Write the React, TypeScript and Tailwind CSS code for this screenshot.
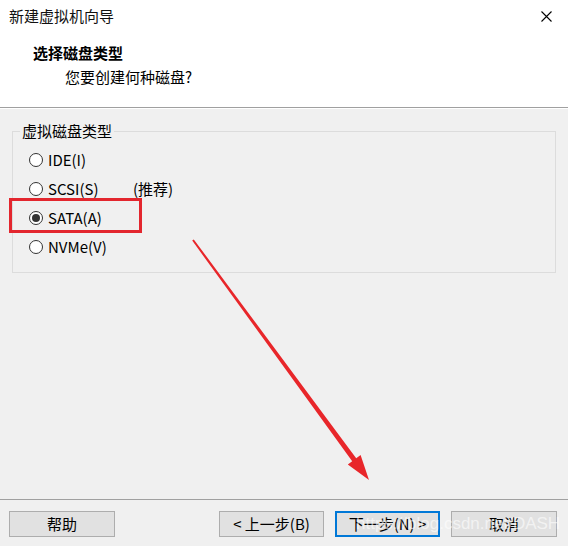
import React from "react";

const font = '"Microsoft YaHei", "Noto Sans CJK SC", "Noto Sans", sans-serif';

function Radio({ checked }: { checked?: boolean }) {
  return (
    <span className="flex h-[14px] w-[14px] items-center justify-center rounded-full border border-[#333] bg-white">
      {checked && <span className="h-[8px] w-[8px] rounded-full bg-[#333]" />}
    </span>
  );
}

function Btn({ children, primary, wide }: { children: React.ReactNode; primary?: boolean; wide?: boolean }) {
  return (
    <div
      className={
        "flex h-[26px] items-center justify-center bg-[#e1e1e1] text-[15px] text-black " +
        (wide ? "w-[106px] " : "w-[105px] ") +
        (primary ? "border-2 border-[#0078d7]" : "border border-[#adadad]")
      }
    >
      {children}
    </div>
  );
}

export default function App() {
  const rows = [
    { label: "IDE(I)" },
    { label: "SCSI(S)", extra: "(推荐)" },
    { label: "SATA(A)", checked: true },
    { label: "NVMe(V)" },
  ];
  return (
    <div
      className="relative flex h-[546px] w-[568px] flex-col overflow-hidden bg-[#f0f0f0] text-black"
      style={{ fontFamily: font }}
    >
      <div className="h-[108px] shrink-0 border-b border-[#a0a0a0] bg-white">
        <div className="flex h-[32px] items-center justify-between pl-[9px] pr-[16px]">
          <span className="text-[15px] leading-[20px] text-[#111]">新建虚拟机向导</span>
          <svg width="11" height="11" viewBox="0 0 11 11">
            <path d="M0.5 0.5 L10.5 10.5 M10.5 0.5 L0.5 10.5" stroke="#000" strokeWidth="1.1" />
          </svg>
        </div>
        <div className="mt-[11px] pl-[33px] text-[15px] font-bold leading-[20px]">选择磁盘类型</div>
        <div className="mt-[4px] pl-[65px] text-[15px] leading-[20px]">您要创建何种磁盘?</div>
      </div>
      <div className="flex-1 border-t border-white px-[12px] pt-[12px]">
        <fieldset className="h-[152px] border border-[#dcdcdc] pl-[7px] pr-[7px] pb-[9px]">
          <legend className="px-[2px] text-[15px] leading-[20px]">虚拟磁盘类型</legend>
          <div className="mt-[4px] flex flex-col">
            {rows.map((r) => (
              <div key={r.label} className="flex h-[29px] items-center pl-[9px]">
                <Radio checked={r.checked} />
                <span className="ml-[5px] w-[85px] text-[15px] leading-[20px]">{r.label}</span>
                {r.extra && <span className="text-[15px] leading-[20px]">{r.extra}</span>}
              </div>
            ))}
          </div>
        </fieldset>
      </div>
      <div className="flex h-[47px] shrink-0 items-start border-t border-[#a0a0a0] pl-[9px] pr-[11px] pt-[11px]">
        <Btn wide>帮助</Btn>
        <div className="ml-auto flex gap-[11px]">
          <Btn>&lt; 上一步(B)</Btn>
          <Btn primary>下一步(N) &gt;</Btn>
          <Btn wide>取消</Btn>
        </div>
      </div>

      <div className="pointer-events-none absolute left-[9px] top-[198px] h-[35px] w-[133px] border-[3px] border-[#e3262e]" />
      <svg className="pointer-events-none absolute left-0 top-0" width="568" height="546">
        <polygon
          points="192.2,240.6 352.2,461.3 347.8,464.5 369,480 360.6,455.1 356.2,458.3 193.8,239.4"
          fill="#e8262a"
        />
      </svg>
      <span
        className="pointer-events-none absolute left-[356px] top-[512px] text-[17px] leading-[24px] text-white/60"
        style={{ fontFamily: '"Liberation Sans", sans-serif' }}
      >
        https://blog.csdn.net/DASH
      </span>
    </div>
  );
}
